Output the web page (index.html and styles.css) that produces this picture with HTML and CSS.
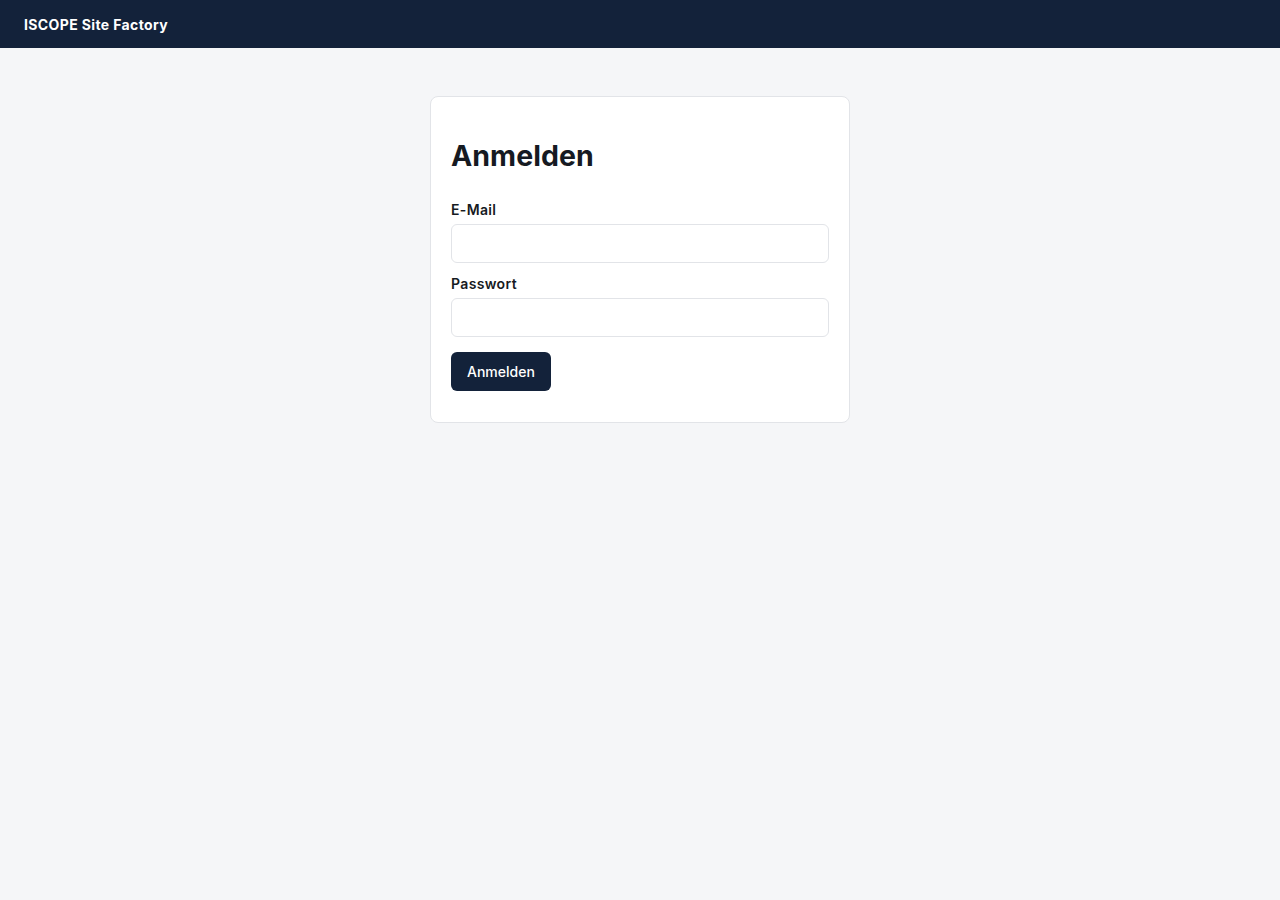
FILE: index.html
```html
<!DOCTYPE html>
<html lang="de">
<head>
<meta charset="utf-8">
<title>Anmelden – ISCOPE Site Factory</title>
<link rel="stylesheet" href="styles.css">
</head>
<body>
<header class="topbar">
  <span class="brand">ISCOPE Site Factory</span>
</header>
<main class="main">
  <section class="card">
    <h1 class="title">Anmelden</h1>
    <form class="form">
      <label class="label" for="email">E-Mail</label>
      <input class="input" id="email" type="email">
      <label class="label label-gap" for="pw">Passwort</label>
      <input class="input" id="pw" type="password">
      <button class="button" type="button">Anmelden</button>
    </form>
  </section>
</main>
</body>
</html>
```
FILE: styles.css
```css
* { box-sizing: border-box; }
html, body { margin: 0; padding: 0; }
body {
  background: #f5f6f8;
  font-family: Inter, "Noto Sans", sans-serif;
  color: #111827;
  min-height: 900px;
}
.topbar {
  height: 48px;
  background: #13223a;
  display: flex;
  align-items: center;
  padding: 0 24px;
}
.brand {
  color: #ffffff;
  font-size: 14px;
  font-weight: 700;
  letter-spacing: 0.37px;
}
.main {
  display: flex;
  justify-content: center;
  padding-top: 48px;
}
.card {
  width: 420px;
  background: #ffffff;
  border: 1px solid #e2e4e8;
  border-radius: 8px;
  padding: 41px 20px 31px;
}
.title {
  margin: 0 0 26px;
  font-size: 28.5px;
  line-height: 36px;
  font-weight: 700;
  letter-spacing: 0.05px;
  color: #161a22;
}
.form {
  display: flex;
  flex-direction: column;
  align-items: flex-start;
}
.label {
  font-size: 14px;
  line-height: 20px;
  font-weight: 600;
  letter-spacing: 0.35px;
  color: #161a22;
  margin-bottom: 4px;
}
.label-gap { margin-top: 11px; }
.input {
  width: 100%;
  height: 39px;
  border: 1px solid #e2e4e8;
  border-radius: 6px;
  background: #fff;
  font: inherit;
  padding: 0 10px;
  outline: none;
}
.button {
  margin-top: 15px;
  height: 39px;
  padding: 0 16px;
  background: #13223a;
  color: #ffffff;
  border: none;
  border-radius: 6px;
  font-family: Inter, "Noto Sans", sans-serif;
  font-size: 14px;
  font-weight: 500;
}
```
